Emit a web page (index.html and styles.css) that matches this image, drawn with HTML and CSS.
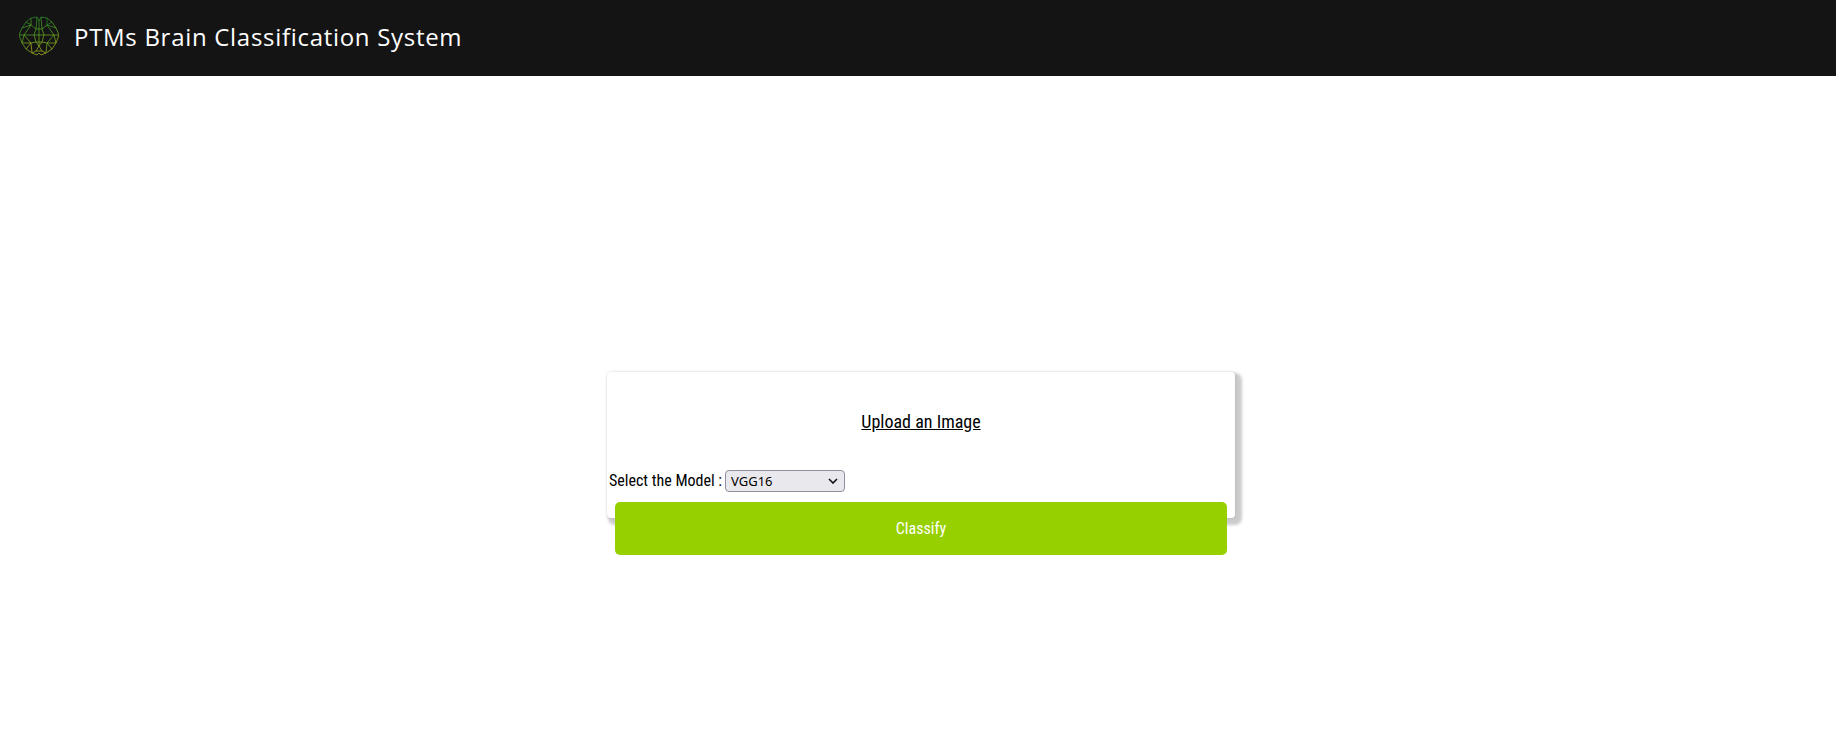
FILE: index.html
```html
<!DOCTYPE html>
<html lang="en">
<head>
<meta charset="utf-8">
<title>PTMs Brain Classification System</title>
<link rel="stylesheet" href="styles.css">
</head>
<body>
<header class="topbar">
  <svg class="logo" viewBox="0 0 40 40" aria-hidden="true">
    <defs>
      <linearGradient id="brain" x1="0.2" y1="0" x2="0.6" y2="1">
        <stop offset="0" stop-color="#1c7a28"/>
        <stop offset="0.5" stop-color="#559f22"/>
        <stop offset="1" stop-color="#a3a81a"/>
      </linearGradient>
    </defs>
    <g fill="none" stroke="url(#brain)" stroke-width="0.8" stroke-linejoin="round">
      <path d="M12 2 L18 1 L20 5 L22 1 L28 2 L33 6 L37 12 L40 19 L37 27 L33 33 L27 37 L22 39 L20 37 L18 39 L13 37 L7 33 L3 27 L0 19 L3 12 L7 6 Z"/>
      <path d="M12 2 L12 9 L7 6 M12 9 L3 12 M12 9 L5 19 L0 19 M5 19 L3 27 M5 19 L12 27 L7 33 M12 27 L13 37 M12 27 L3 27"/>
      <path d="M28 2 L28 9 L33 6 M28 9 L37 12 M28 9 L35 19 L40 19 M35 19 L37 27 M35 19 L28 27 L33 33 M28 27 L27 37 M28 27 L37 27"/>
      <path d="M12 9 L17 13 L18 1 M28 9 L23 13 L22 1 M17 13 L23 13 M17 13 L15 19 L5 19 M23 13 L25 19 L35 19 M15 19 L25 19 M15 19 L17 26 L12 27 M25 19 L23 26 L28 27 M17 26 L23 26 M17 26 L20 30 L23 26 M20 30 L17 35 L13 37 M20 30 L23 35 L27 37 M17 35 L23 35 M20 5 L20 30"/>
    </g>
  </svg>
  <h1 class="brand">PTMs Brain Classification System</h1>
</header>
<main class="stage">
  <form class="card">
    <div class="upload"><a class="upload-link" href="#">Upload an Image</a></div>
    <div class="model-row">
      <label class="model-label" for="model">Select the Model :</label>
      <select class="model-select" id="model">
        <option>VGG16</option>
        <option>ResNet50</option>
      </select>
    </div>
    <button class="classify" type="button">Classify</button>
  </form>
</main>
</body>
</html>
```
FILE: styles.css
```css
* {
  box-sizing: border-box;
}

html,
body {
  margin: 0;
  height: 100%;
  background: #fff;
  overflow: hidden;
}

body {
  font-family: "Roboto", "Liberation Sans", sans-serif;
  font-stretch: 78%;
  color: #000;
}

.topbar {
  display: flex;
  align-items: center;
  gap: 15px;
  height: 76px;
  padding: 0 0 0 19px;
  background: #141414;
}

.logo {
  width: 40px;
  height: 40px;
  flex: none;
  margin-top: -4px;
}

.brand {
  margin: 0 0 4px;
  font-family: "Open Sans", "Noto Sans", sans-serif;
  font-stretch: 100%;
  font-size: 24px;
  font-weight: 400;
  letter-spacing: 0.7px;
  color: #fff;
}

.stage {
  padding: 296px 0 0 607px;
}

.card {
  display: flex;
  flex-direction: column;
  width: 628px;
  height: 146px;
  background: #fff;
  border-radius: 4px;
  box-shadow: 0 0 3px rgba(0, 0, 0, 0.15), 4px 4px 3px 3px rgba(0, 0, 0, 0.2);
}

.upload {
  padding-top: 39px;
  text-align: center;
  font-size: 18px;
  line-height: 22px;
}

.upload-link {
  color: #000;
  text-decoration: underline;
}

.model-row {
  display: flex;
  align-items: center;
  gap: 3px;
  margin-top: 37px;
  padding-left: 2px;
  height: 22px;
  font-size: 16px;
}

.model-label {
  margin-bottom: 2px;
}

.model-select {
  appearance: none;
  width: 120px;
  height: 22px;
  padding: 0 5px;
  font-family: "Noto Sans", "DejaVu Sans", sans-serif;
  font-stretch: 100%;
  font-size: 13px;
  color: #000;
  background-color: #e9e9ed;
  background-image: url("data:image/svg+xml,%3Csvg xmlns='http://www.w3.org/2000/svg' width='10' height='6' viewBox='0 0 10 6'%3E%3Cpath d='M1 1l4 4 4-4' fill='none' stroke='%23111' stroke-width='1.6'/%3E%3C/svg%3E");
  background-repeat: no-repeat;
  background-position: right 6px center;
  border: 1px solid #8f8f9d;
  border-radius: 4px;
}

.classify {
  flex: none;
  align-self: center;
  width: 612px;
  height: 53px;
  margin-top: 10px;
  border: 0;
  border-radius: 5px;
  background: #97d000;
  color: #fff;
  font-family: inherit;
  font-stretch: inherit;
  font-size: 16px;
}
```
